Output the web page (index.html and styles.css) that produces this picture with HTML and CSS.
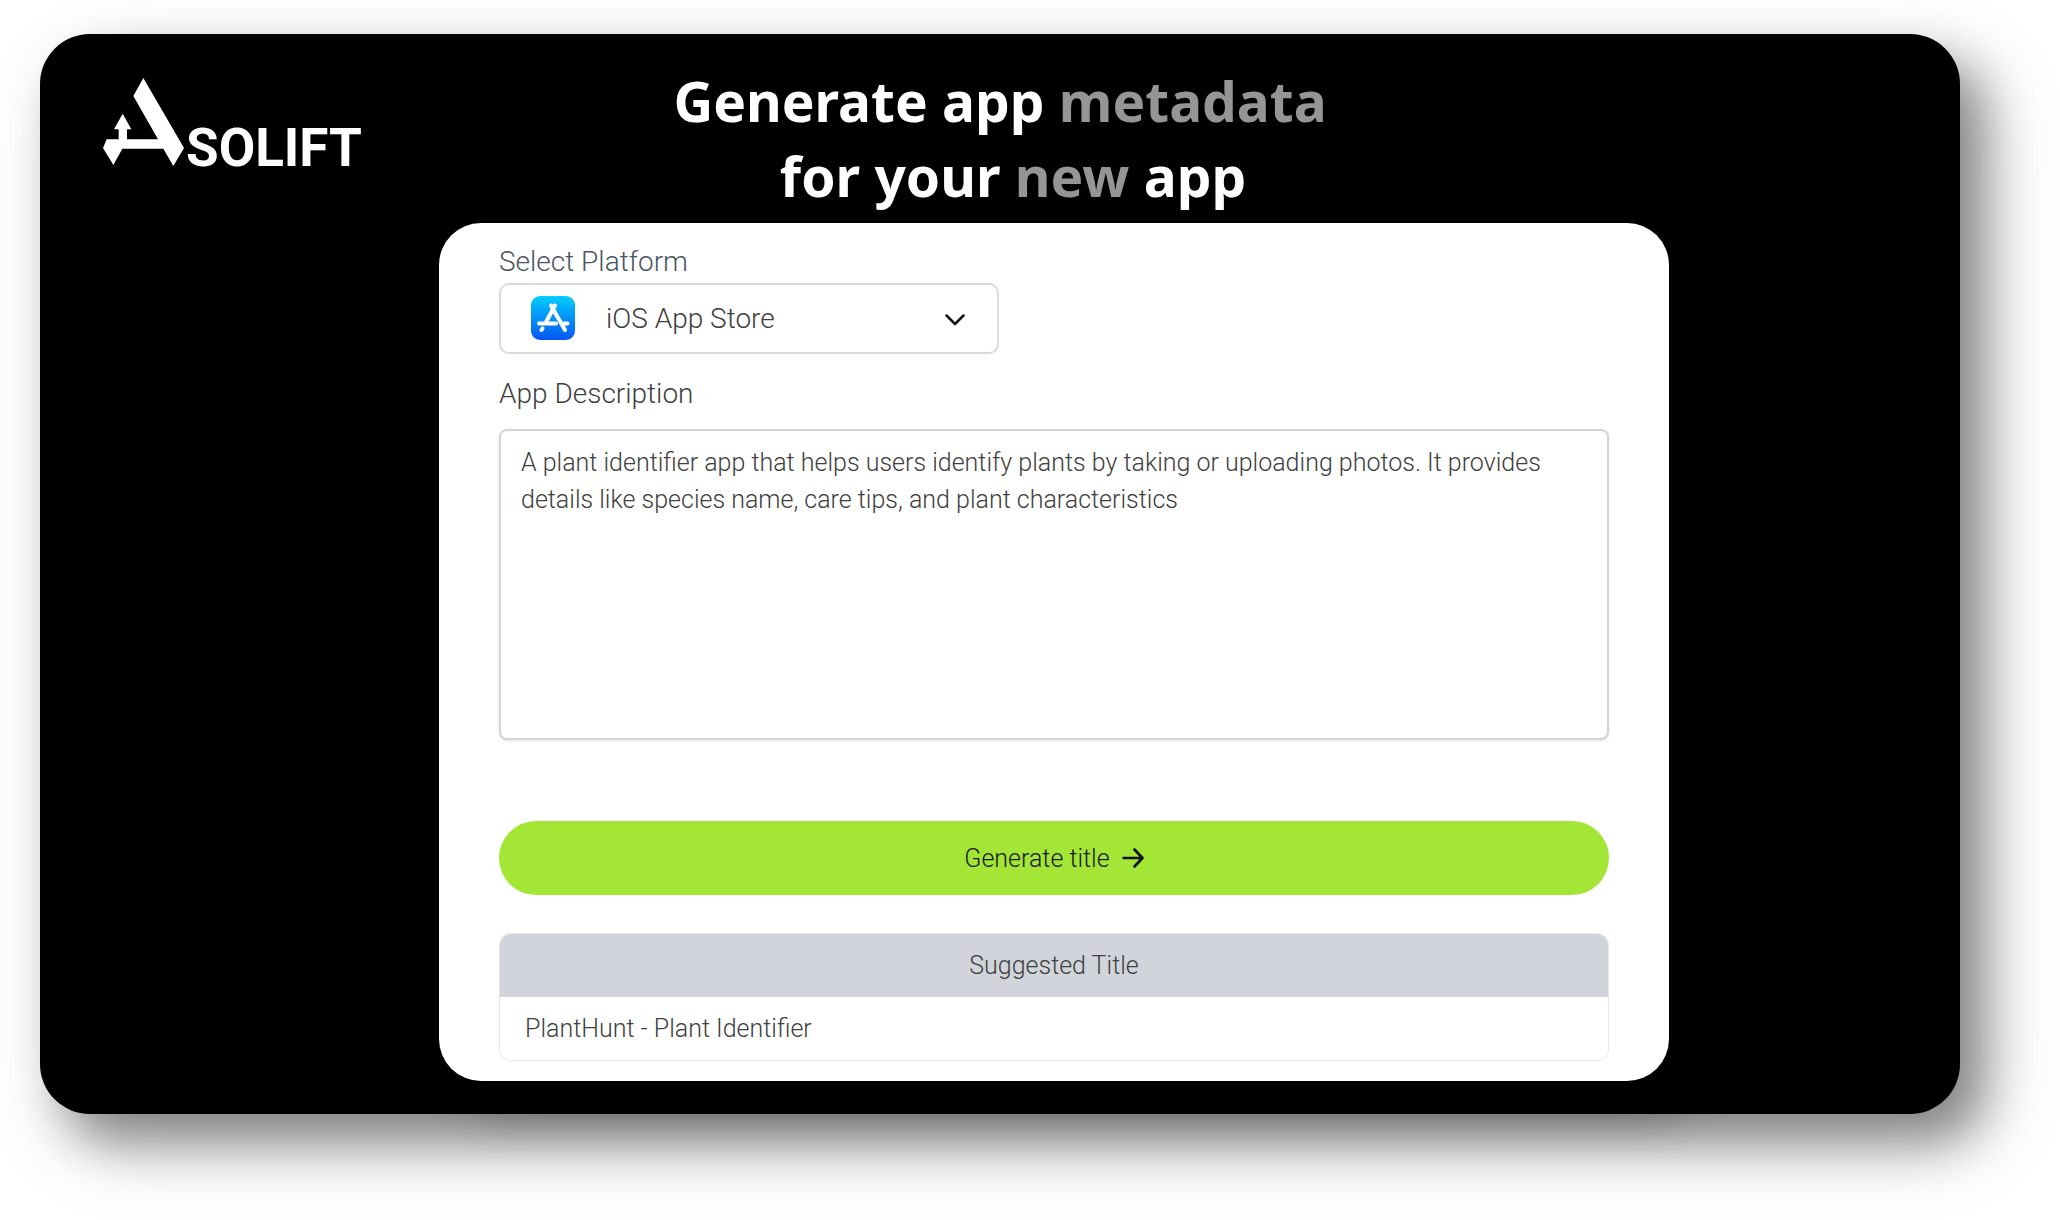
FILE: index.html
```html
<!DOCTYPE html>
<html lang="en">

	<head>
		<meta charset="utf-8" />
		<title>Asolift</title>
		<link rel="stylesheet" href="styles.css">
	</head>

	<body>
		<main class="stage">
			<header class="top">
				<a class="logo" href="#" aria-label="Asolift">
					<svg class="logo-mark" viewBox="39 53 243 264" aria-hidden="true">
						<path fill="#fff" d="M160 53L282 263L250 317L220 265H97L70 314L39 263L50 237H86V207H72L98 160L124 207H111V237H204L130 107Z" />
					</svg>
					<span class="logo-text">SOLIFT</span>
				</a>
				<h1 class="headline">
					<span class="line">Generate app <em>metadata</em></span>
					<span class="line line-second">for your <em>new</em> app</span>
				</h1>
			</header>

			<form class="panel">
				<label class="label label-platform" for="platform">Select Platform</label>
				<div class="platform">
					<svg class="store-icon" viewBox="0 0 44 44" aria-hidden="true">
						<defs>
							<linearGradient id="store" x1="0" y1="0" x2="0" y2="1">
								<stop offset="0" stop-color="#05cdfd" />
								<stop offset="1" stop-color="#0556f2" />
							</linearGradient>
						</defs>
						<rect width="44" height="44" rx="9" fill="url(#store)" />
						<g stroke="#fff" stroke-width="4" stroke-linecap="round" fill="none">
							<path d="M24 9.500L14.500 27" />
							<path d="M20 9.500L34 34" />
							<path d="M8 27.500H25M32 27.500H36.500" />
							<path d="M11.500 32.500L10.500 34" />
						</g>
					</svg>
					<select class="platform-select" id="platform">
						<option>iOS App Store</option>
					</select>
					<svg class="chevron" viewBox="0 0 20 12" aria-hidden="true">
						<path d="M1.500 1.500L10 10L18.500 1.500" fill="none" stroke="#111" stroke-width="2.500" stroke-linecap="round" stroke-linejoin="round" />
					</svg>
				</div>

				<label class="label label-description" for="description">App Description</label>
				<textarea class="description" id="description">A plant identifier app that helps users identify plants by taking or uploading photos. It provides details like species name, care tips, and plant characteristics</textarea>

				<button class="generate" type="button">
					Generate title
					<svg class="arrow" viewBox="0 0 22 20" aria-hidden="true">
						<path d="M1.500 10H20M12.500 1.500L20.500 10L12.500 18.500" fill="none" stroke="#111" stroke-width="2.600" stroke-linecap="round" stroke-linejoin="round" />
					</svg>
				</button>

				<table class="titles">
					<thead>
						<tr>
							<th>Suggested Title</th>
						</tr>
					</thead>
					<tbody>
						<tr>
							<td>PlantHunt - Plant Identifier</td>
						</tr>
					</tbody>
				</table>
			</form>
		</main>
	</body>

</html>
```
FILE: styles.css
```css
* {
	box-sizing: border-box;
}

body {
	margin: 0;
	padding: 34px 100px 106px 40px;
	background: #fff;
	font-family: Roboto, "Liberation Sans", sans-serif;
	font-weight: 300;
	color: #404040;
}

.stage {
	padding-bottom: 33px;
	background: #000;
	border-radius: 50px;
	box-shadow: 24px 28px 50px rgba(0, 0, 0, 0.42), 26px 30px 90px rgba(0, 0, 0, 0.14);
}

.top {
	display: grid;
	grid-template-columns: 1fr auto 1fr;
	padding: 29px 63px 10px;
}

.logo {
	display: flex;
	align-items: baseline;
	align-self: start;
	gap: 2px;
	margin-top: 15px;
	height: 88px;
	color: #fff;
	text-decoration: none;
}

.logo-mark {
	width: 81px;
	height: 88px;
}

.logo-text {
	font-size: 53px;
	line-height: 56px;
	font-weight: 700;
}

.headline {
	margin: 0;
	font-family: "Noto Sans", "Open Sans", sans-serif;
	font-size: 55px;
	line-height: 75px;
	font-weight: 700;
	text-align: center;
	color: #fff;
}

.headline em {
	font-style: normal;
	color: #979593;
}

.line {
	display: block;
}

.line-second {
	padding-left: 26px;
}

.panel {
	display: flex;
	flex-direction: column;
	margin: 0 291px 0 399px;
	padding: 19px 60px 20px;
	background: #fff;
	border-radius: 42px;
	box-shadow: 24px 28px 50px rgba(0, 0, 0, 0.3);
}

.label {
	font-size: 28px;
	line-height: 40px;
}

.label-platform {
	color: #4b5563;
}

.label-description {
	margin-top: 20px;
}

.platform {
	position: relative;
	width: 45%;
	margin-top: 1px;
}

.platform-select {
	display: block;
	width: 100%;
	height: 71px;
	padding: 0 60px 0 105px;
	appearance: none;
	background: #fff;
	border: 2px solid #d8dae0;
	border-radius: 10px;
	font: inherit;
	font-size: 28px;
	color: inherit;
}

.store-icon {
	position: absolute;
	top: 13px;
	left: 32px;
	width: 44px;
	height: 44px;
	pointer-events: none;
}

.chevron {
	position: absolute;
	top: 31px;
	right: 34px;
	width: 20px;
	height: 12px;
	pointer-events: none;
}

.description {
	height: 311px;
	margin-top: 15px;
	padding: 13px 20px;
	border: 2px solid #d1d5db;
	border-radius: 8px;
	box-shadow: 0 1px 3px rgba(0, 0, 0, 0.1);
	resize: none;
	font: inherit;
	font-size: 25px;
	line-height: 37px;
	color: inherit;
}

.generate {
	display: flex;
	align-items: center;
	justify-content: center;
	gap: 12px;
	height: 74px;
	margin-top: 81px;
	border: 0;
	border-radius: 37px;
	background: #a3e635;
	font: inherit;
	font-size: 25px;
	color: #1a1a1a;
}

.arrow {
	width: 22px;
	height: 20px;
}

.titles {
	width: 100%;
	margin-top: 38px;
	border: 1px solid #e5e7eb;
	border-radius: 12px;
	border-spacing: 0;
	overflow: hidden;
	font-size: 25px;
}

.titles th,
.titles td {
	height: 63px;
	padding: 0 25px;
}

.titles th {
	background: #d1d5db;
	font-weight: 300;
	text-align: center;
}
```
